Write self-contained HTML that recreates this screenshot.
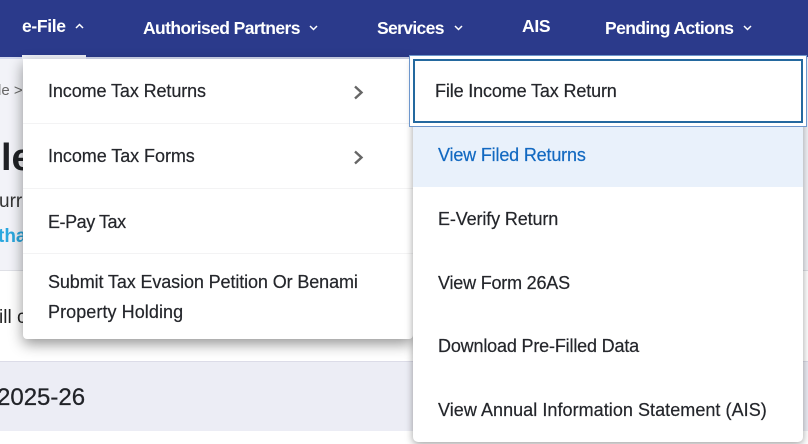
<!DOCTYPE html>
<html>
<head>
<meta charset="utf-8">
<style>
html,body{margin:0;padding:0}
body{width:808px;height:444px;overflow:hidden;position:relative;background:#fff;font-family:"Liberation Sans",sans-serif;color:#212328}
.a{position:absolute;white-space:nowrap}
.nav{position:absolute;left:0;top:0;width:808px;height:57px;background:#2b3a8b}
.n{position:absolute;color:#fff;font-size:17.5px;font-weight:700;line-height:22px;white-space:nowrap}
.m{position:absolute;font-size:18px;line-height:30px;white-space:nowrap;color:#24262b;-webkit-text-stroke:.2px #24262b}
svg{position:absolute;overflow:visible}
</style>
</head>
<body>
<div class="a" style="left:0;top:57px;width:808px;height:213px;background:#f2f3f8"></div>
<div class="a" style="left:0;top:270px;width:808px;height:1px;background:#dfe0e6"></div>
<div class="a" style="left:0;top:361px;width:808px;height:1px;background:#dcdce8"></div>
<div class="a" style="left:0;top:362px;width:808px;height:69px;background:#ecedf5"></div>

<div class="a" style="left:-2px;top:82px;font-size:15px;line-height:18px;color:#666">le &gt;</div>
<div class="a" style="left:1px;top:135px;font-size:38px;line-height:46px;font-weight:700;color:#1f2125">le</div>
<div class="a" style="left:-1px;top:192px;font-size:19px;line-height:20px;color:#333">urr</div>
<div class="a" style="left:-2px;top:226px;font-size:19px;line-height:22px;font-weight:700;color:#2aa7de">tha</div>
<div class="a" style="left:-1px;top:307px;font-size:19px;line-height:22px;color:#222">ill c</div>
<div class="a" style="left:-3px;top:384px;font-size:24px;line-height:28px;color:#212328;-webkit-text-stroke:.25px #212328">2025-26</div>

<div class="nav"></div>
<div class="a" style="left:0;top:57px;width:808px;height:2px;background:#d4d9ee"></div>
<div class="a" style="left:22px;top:55px;width:64px;height:4px;background:#eef0f8"></div>
<div class="n" style="left:22px;top:15px;letter-spacing:-.35px">e-File</div>
<svg style="left:75px;top:23px" width="9" height="6" viewBox="0 0 9 6"><path d="M1 5L4.5 1.5L8 5" fill="none" stroke="#fff" stroke-width="1.5"/></svg>
<div class="n" style="left:143px;top:17px;letter-spacing:-.6px">Authorised Partners</div>
<svg style="left:309px;top:25px" width="9" height="6" viewBox="0 0 9 6"><path d="M1 1L4.5 4.5L8 1" fill="none" stroke="#fff" stroke-width="1.5"/></svg>
<div class="n" style="left:377px;top:17px;letter-spacing:-.65px">Services</div>
<svg style="left:454px;top:25px" width="9" height="6" viewBox="0 0 9 6"><path d="M1 1L4.5 4.5L8 1" fill="none" stroke="#fff" stroke-width="1.5"/></svg>
<div class="n" style="left:522px;top:15px;letter-spacing:-.3px">AIS</div>
<div class="n" style="left:605px;top:17px;letter-spacing:-.6px">Pending Actions</div>
<svg style="left:743px;top:25px" width="9" height="6" viewBox="0 0 9 6"><path d="M1 1L4.5 4.5L8 1" fill="none" stroke="#fff" stroke-width="1.5"/></svg>

<!-- first menu -->
<div class="a" style="left:23px;top:59px;width:390px;height:280px;background:#fff;border-radius:0 0 4px 4px;box-shadow:0 5px 14px rgba(0,0,0,.42)"></div>
<div class="a" style="left:23px;top:123px;width:390px;height:1px;background:#f3f3f4"></div>
<div class="a" style="left:23px;top:188px;width:390px;height:1px;background:#f3f3f4"></div>
<div class="a" style="left:23px;top:253px;width:390px;height:1px;background:#f3f3f4"></div>
<div class="m" style="left:48px;top:76px;letter-spacing:-.1px">Income Tax Returns</div>
<svg style="left:353px;top:84.5px" width="11" height="15" viewBox="0 0 11 15"><path d="M2 1.5L8.5 7.5L2 13.5" fill="none" stroke="#666" stroke-width="2.4"/></svg>
<div class="m" style="left:48px;top:141px;letter-spacing:-.06px">Income Tax Forms</div>
<svg style="left:353px;top:149.5px" width="11" height="15" viewBox="0 0 11 15"><path d="M2 1.5L8.5 7.5L2 13.5" fill="none" stroke="#666" stroke-width="2.4"/></svg>
<div class="m" style="left:48px;top:207px;letter-spacing:-.45px">E-Pay Tax</div>
<div class="m" style="left:48px;top:267px;letter-spacing:-.11px">Submit Tax Evasion Petition Or Benami</div>
<div class="m" style="left:48px;top:297px;letter-spacing:.07px">Property Holding</div>

<!-- second menu -->
<div class="a" style="left:413px;top:59px;width:390px;height:383px;background:#fff;border-radius:0 0 5px 5px;box-shadow:0 2px 8px rgba(0,0,0,.38)"></div>
<div class="a" style="left:413px;top:127px;width:390px;height:60px;background:#e9f1fb"></div>
<div class="a" style="left:409px;top:55px;width:396px;height:70px;border:1px solid #6e97cd;background:#fff"></div>
<div class="a" style="left:413px;top:59px;width:386px;height:60px;border:2px solid #24699f;background:#fff"></div>
<div class="m" style="left:435px;top:76px;letter-spacing:-.14px">File Income Tax Return</div>
<div class="m" style="left:438px;top:140px;color:#1269c1;-webkit-text-stroke:.2px #1269c1;letter-spacing:-.17px">View Filed Returns</div>
<div class="m" style="left:438px;top:204px;letter-spacing:-.13px">E-Verify Return</div>
<div class="m" style="left:438px;top:268px;letter-spacing:-.2px">View Form 26AS</div>
<div class="m" style="left:438px;top:331px;letter-spacing:-.17px">Download Pre-Filled Data</div>
<div class="m" style="left:438px;top:395px;letter-spacing:.05px">View Annual Information Statement (AIS)</div>
</body>
</html>
